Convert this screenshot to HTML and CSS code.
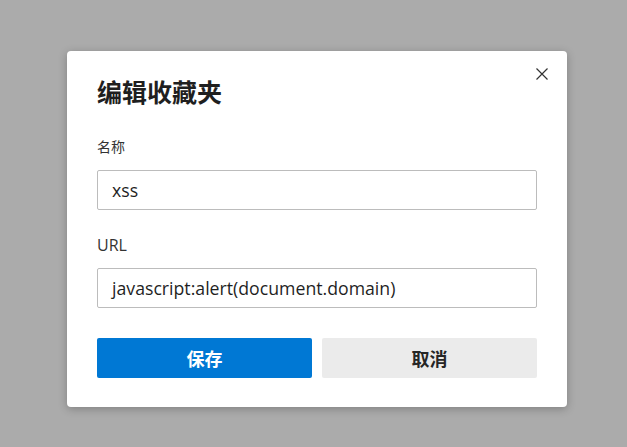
FILE: index.html
```html
<!DOCTYPE html>
<html lang="zh">
<head>
<meta charset="utf-8">
<link rel="stylesheet" href="styles.css">
</head>
<body>
<div class="backdrop">
  <div class="dialog">
    <button class="close" aria-label="关闭">
      <svg width="12" height="12" viewBox="0 0 12 12"><path d="M0.5 0.5L11.5 11.5M11.5 0.5L0.5 11.5" stroke="#333" stroke-width="1.2" fill="none"/></svg>
    </button>
    <h1 class="title">编辑收藏夹</h1>
    <div class="field">
      <label class="label">名称</label>
      <div class="input">xss</div>
    </div>
    <div class="field">
      <label class="label latin">URL</label>
      <div class="input">javascript:alert(document.domain)</div>
    </div>
    <div class="actions">
      <button class="btn primary">保存</button>
      <button class="btn secondary">取消</button>
    </div>
  </div>
</div>
</body>
</html>
```
FILE: styles.css
```css
html, body {
  margin: 0;
  padding: 0;
  height: 100%;
}
body {
  background: #ababab;
  font-family: "Open Sans", "Noto Sans CJK SC", sans-serif;
  color: #262626;
}
.backdrop {
  display: flex;
  justify-content: flex-start;
  padding: 51px 0 0 67px;
}
.dialog {
  position: relative;
  width: 440px;
  padding: 24px 30px 29px;
  background: #fff;
  border-radius: 4px;
  box-shadow: 0 2px 8px rgba(0,0,0,0.25);
}
.close {
  position: absolute;
  top: 17px;
  right: 19px;
  width: 12px;
  height: 12px;
  padding: 0;
  border: 0;
  background: none;
  display: flex;
}
.title {
  margin: 0;
  font-size: 25px;
  line-height: 32px;
  font-weight: 700;
  font-family: "Noto Sans CJK SC", sans-serif;
  color: #1f1f1f;
}
.field {
  margin-top: 30px;
}
.field + .field {
  margin-top: 25px;
}
.label {
  display: block;
  font-size: 14px;
  line-height: 20px;
  margin-bottom: 13px;
  color: #333;
}
.label.latin {
  font-size: 16px;
}
.input {
  box-sizing: border-box;
  height: 40px;
  border: 1px solid #bcbcbc;
  border-radius: 2px;
  padding: 0 14px;
  font-size: 17.7px;
  line-height: 38px;
  color: #1f1f1f;
}
.actions {
  display: flex;
  gap: 10px;
  margin-top: 30px;
}
.btn {
  flex: 1;
  height: 40px;
  border: 0;
  border-radius: 2px;
  font-family: "Noto Sans CJK SC", sans-serif;
  font-size: 18px;
  font-weight: 700;
}
.primary {
  background: #0078d4;
  color: #fff;
}
.secondary {
  background: #ebebeb;
  color: #262626;
}
```
